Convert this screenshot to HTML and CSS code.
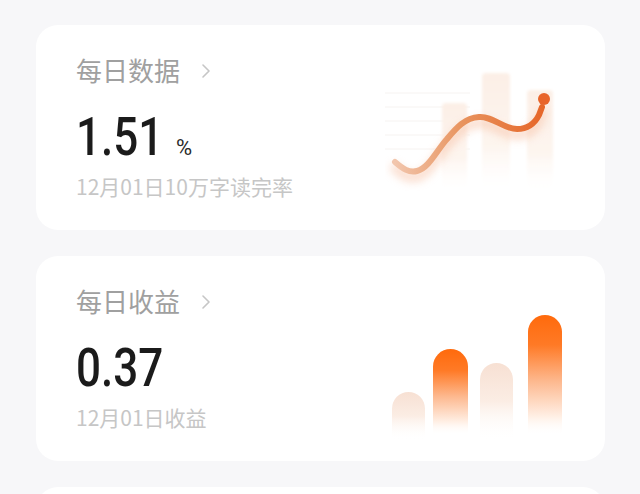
FILE: index.html
```html
<!DOCTYPE html>
<html lang="zh-CN">
<head>
<meta charset="utf-8">
<title>每日数据</title>
<link rel="stylesheet" href="styles.css">
</head>
<body>
<div class="page">
  <section class="card card-data">
    <div class="info">
      <div class="title">每日数据<svg class="chev" viewBox="0 0 8 14" width="8" height="14"><polyline points="1,1 7,7 1,13" fill="none" stroke="#c6c6c6" stroke-width="1.6" stroke-linecap="round" stroke-linejoin="round"/></svg></div>
      <div class="value"><span class="num">1.51</span><span class="unit">%</span></div>
      <div class="sub">12月01日10万字读完率</div>
    </div>
    <svg class="chart chart-line" viewBox="0 0 180 130" width="180" height="130">
      <defs>
        <linearGradient id="fadeBar" x1="0" y1="0" x2="0" y2="1">
          <stop offset="0" stop-color="#fcefe6"/>
          <stop offset="0.6" stop-color="#fdf5ef"/>
          <stop offset="1" stop-color="#ffffff" stop-opacity="0"/>
        </linearGradient>
        <linearGradient id="lineGrad" x1="0" y1="0" x2="1" y2="0">
          <stop offset="0" stop-color="#f2c6ad"/>
          <stop offset="0.45" stop-color="#e8945f"/>
          <stop offset="1" stop-color="#e6672a"/>
        </linearGradient>
        <filter id="blur" x="-20%" y="-20%" width="140%" height="160%"><feGaussianBlur stdDeviation="4"/></filter>
        <filter id="soft" x="-20%" y="-20%" width="140%" height="140%"><feGaussianBlur stdDeviation="1.5"/></filter>
      </defs>
      <g stroke="#f6f3f1" stroke-width="1">
        <line x1="0" y1="28" x2="85" y2="28"/>
        <line x1="0" y1="42" x2="85" y2="42"/>
        <line x1="0" y1="56" x2="85" y2="56"/>
        <line x1="0" y1="70" x2="85" y2="70"/>
        <line x1="0" y1="84" x2="85" y2="84"/>
      </g>
      <g filter="url(#soft)">
        <rect x="57" y="38" width="25" height="92" rx="4" fill="url(#fadeBar)"/>
        <rect x="97" y="8" width="28" height="122" rx="4" fill="url(#fadeBar)"/>
        <rect x="142" y="25" width="26" height="105" rx="4" fill="url(#fadeBar)"/>
      </g>
      <path d="M10,97 C18,104 24,108 32,106 C44,103 52,85 62,74 C72,62 80,53 94,52 C108,51 118,64 132,64 C144,64 150,58 154,50 L157,42" fill="none" stroke="#f6b99a" stroke-width="9" stroke-linecap="round" opacity="0.5" transform="translate(0,6)" filter="url(#blur)"/>
      <path d="M10,97 C18,104 24,108 32,106 C44,103 52,85 62,74 C72,62 80,53 94,52 C108,51 118,64 132,64 C144,64 150,58 154,50 L157,42" fill="none" stroke="url(#lineGrad)" stroke-width="6" stroke-linecap="round"/>
      <circle cx="159" cy="34" r="6" fill="#e8642a"/>
    </svg>
  </section>

  <section class="card card-income">
    <div class="info">
      <div class="title">每日收益<svg class="chev" viewBox="0 0 8 14" width="8" height="14"><polyline points="1,1 7,7 1,13" fill="none" stroke="#c6c6c6" stroke-width="1.6" stroke-linecap="round" stroke-linejoin="round"/></svg></div>
      <div class="value"><span class="num">0.37</span></div>
      <div class="sub">12月01日收益</div>
    </div>
    <svg class="chart chart-bars" viewBox="0 0 185 135" width="185" height="135">
      <defs>
        <linearGradient id="hotBar" x1="0" y1="0" x2="0" y2="1">
          <stop offset="0" stop-color="#ff6a0c"/>
          <stop offset="0.25" stop-color="#ff7a26"/>
          <stop offset="0.55" stop-color="#fdb88e"/>
          <stop offset="0.85" stop-color="#fff0e6"/>
          <stop offset="1" stop-color="#ffffff" stop-opacity="0"/>
        </linearGradient>
        <linearGradient id="softBar" x1="0" y1="0" x2="0" y2="1">
          <stop offset="0" stop-color="#f7e0d3"/>
          <stop offset="0.5" stop-color="#fbede4"/>
          <stop offset="1" stop-color="#ffffff" stop-opacity="0"/>
        </linearGradient>
      </defs>
      <path d="M7,135 V103.5 A16.5,16.5 0 0 1 40,103.5 V135 Z" fill="url(#softBar)"/>
      <path d="M48,130 V61.5 A17.5,17.5 0 0 1 83,61.5 V130 Z" fill="url(#hotBar)"/>
      <path d="M95,135 V74.5 A16.5,16.5 0 0 1 128,74.5 V135 Z" fill="url(#softBar)"/>
      <path d="M143,130 V27 A17,17 0 0 1 177,27 V130 Z" fill="url(#hotBar)"/>
    </svg>
  </section>

  <section class="card card-next"></section>
</div>
</body>
</html>
```

FILE: styles.css
```css
html, body {
  margin: 0;
  padding: 0;
}
body {
  background: #f7f7f9;
  width: 640px;
  height: 494px;
  overflow: hidden;
  font-family: "Noto Sans CJK SC", "Noto Sans", sans-serif;
}
.page {
  padding: 25px 35px 0 36px;
  display: flex;
  flex-direction: column;
  gap: 26px;
}
.card {
  background: #ffffff;
  border-radius: 22px;
  height: 205px;
  display: flex;
  justify-content: space-between;
  align-items: flex-start;
  box-sizing: border-box;
}
.card-next {
  height: 120px;
  flex: none;
}
.info {
  padding: 30px 0 0 40px;
  display: flex;
  flex-direction: column;
}
.title {
  font-size: 26px;
  line-height: 30px;
  color: #a0a0a0;
  display: flex;
  align-items: center;
  gap: 22px;
}
.chev {
  display: block;
  margin-top: 2px;
}
.value {
  margin-top: 26px;
  display: flex;
  align-items: baseline;
  height: 52px;
}
.num {
  font-family: Roboto, "Liberation Sans", sans-serif;
  font-weight: 500;
  font-size: 53px;
  line-height: 52px;
  color: #1b1b1b;
  display: inline-block;
  transform: scaleX(0.83);
  transform-origin: left center;
  margin-right: -17px;
}
.unit {
  font-family: Roboto, "Liberation Sans", sans-serif;
  font-size: 22px;
  color: #2a2a2a;
  margin-left: 12px;
}
.sub {
  margin-top: 11px;
  font-size: 21px;
  line-height: 24px;
  color: #c6c6c6;
}
.chart {
  display: block;
  flex: none;
}
.chart-line {
  margin: 40px 40px 0 0;
}
.chart-bars {
  margin: 49px 35px 0 0;
}
```
